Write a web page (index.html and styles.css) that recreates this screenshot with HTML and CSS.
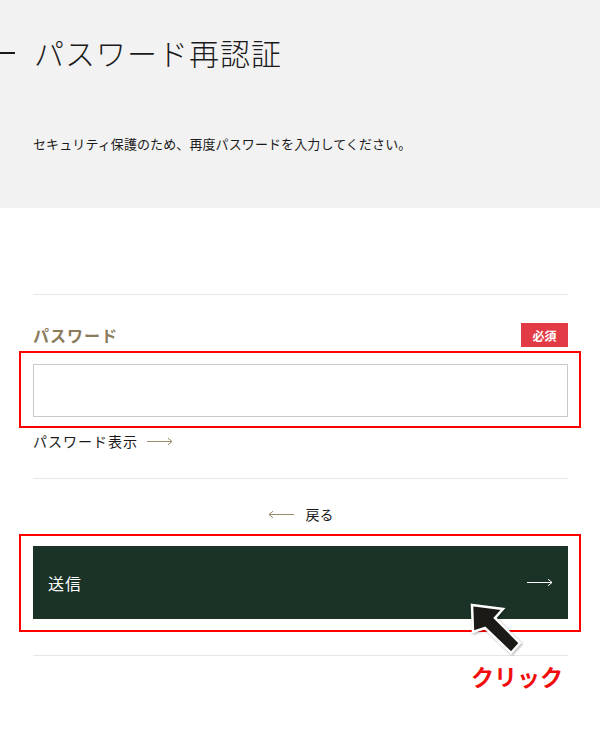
FILE: index.html
```html
<!DOCTYPE html>
<html lang="ja">
<head>
    <meta charset="UTF-8">
    <meta name="viewport" content="width=device-width, initial-scale=1.0">
    <title>パスワード再認証</title>
    <link rel="stylesheet" href="styles.css">
</head>
<body>
    <header class="page-head">
        <h1 class="page-title">パスワード再認証</h1>
        <p class="page-lead">セキュリティ保護のため、再度パスワードを入力してください。</p>
    </header>

    <main class="content">
        <form class="auth-form">
            <div class="field-head">
                <label class="field-label" for="password">パスワード</label>
                <span class="badge">必須</span>
            </div>
            <input class="field-input" type="password" id="password">
            <a class="show-pass" href="#">パスワード表示
                <svg class="arrow" width="26" height="9" viewBox="0 0 26 9"><path d="M0 4.5H25M21 1.2L25 4.5L21 7.8" fill="none" stroke="currentColor" stroke-width="1"/></svg>
            </a>

            <div class="form-actions">
                <a class="back-link" href="#">
                    <svg class="arrow" width="26" height="9" viewBox="0 0 26 9"><path d="M26 4.5H1M5 1.2L1 4.5L5 7.8" fill="none" stroke="currentColor" stroke-width="1"/></svg>
                    戻る
                </a>
                <button class="btn-submit" type="button">
                    <span>送信</span>
                    <svg class="arrow" width="26" height="9" viewBox="0 0 26 9"><path d="M0 4.5H25M21 1.2L25 4.5L21 7.8" fill="none" stroke="currentColor" stroke-width="1"/></svg>
                </button>
            </div>
        </form>
    </main>

    <!-- annotation overlay -->
    <div class="mark mark-input"></div>
    <div class="mark mark-submit"></div>
    <svg class="cursor" width="62" height="60" viewBox="0 0 62 60">
        <polygon points="6,5 37,9 29,18 54,43 45,53 19,28 7,32" fill="#1c1a17" stroke="#fff" stroke-width="2.5" stroke-linejoin="miter"/>
    </svg>
    <div class="click-note">クリック</div>
</body>
</html>
```

FILE: styles.css
```css
* {
    margin: 0;
    padding: 0;
    box-sizing: border-box;
}

body {
    font-family: "Noto Sans CJK JP", "Noto Sans", sans-serif;
    color: #1a1a1a;
    background: #fff;
    position: relative;
    min-height: 748px;
}

a {
    color: inherit;
    text-decoration: none;
}

.page-head {
    background: #f2f2f2;
    padding: 35px 0 54px;
    height: 208px;
}

.page-title {
    display: flex;
    align-items: center;
    gap: 19px;
    font-family: "Liberation Serif", "Noto Sans CJK JP", serif;
    font-weight: 300;
    font-size: 30px;
    line-height: 39px;
    letter-spacing: 1px;
}

.page-title::before {
    content: "";
    width: 15px;
    height: 2px;
    margin-top: -3px;
    background: #1a1a1a;
}

.page-lead {
    margin-top: 60px;
    padding-left: 33px;
    font-size: 13px;
    line-height: 20px;
    letter-spacing: 0.1px;
}

.content {
    padding: 86px 32px 0 33px;
}

.auth-form {
    border-top: 1px solid #e6e6e6;
    padding-top: 28px;
}

.field-head {
    display: flex;
    justify-content: space-between;
    align-items: center;
    height: 24px;
}

.field-label {
    color: #8b7b5c;
    font-weight: 700;
    font-size: 16px;
    letter-spacing: 1px;
}

.badge {
    background: #e23b45;
    color: #fff;
    font-size: 12px;
    font-weight: 700;
    width: 47px;
    height: 24px;
    display: flex;
    align-items: center;
    justify-content: center;
}

.field-input {
    display: block;
    width: 100%;
    height: 53px;
    margin-top: 17px;
    border: 1px solid #c8cbcb;
    background: #fff;
}

.show-pass {
    display: flex;
    align-items: center;
    gap: 9px;
    margin: 14px 0 27px;
    font-size: 14px;
    line-height: 20px;
    letter-spacing: 1px;
}

.show-pass .arrow,
.back-link .arrow {
    color: #9a8b6c;
}

.form-actions {
    border-top: 1px solid #e6e6e6;
    border-bottom: 1px solid #e6e6e6;
    padding: 25px 0 36px;
}

.back-link {
    display: flex;
    justify-content: center;
    align-items: center;
    gap: 12px;
    font-size: 14px;
    line-height: 20px;
}

.btn-submit {
    display: flex;
    justify-content: space-between;
    align-items: center;
    width: 100%;
    height: 73px;
    margin-top: 22px;
    padding: 0 15px;
    border: none;
    background: #1b3226;
    color: #fff;
    font-family: inherit;
    font-size: 16px;
    letter-spacing: 1px;
}

.mark {
    position: absolute;
    left: 19px;
    width: 562px;
    border: 2px solid #ff0000;
}

.mark-input {
    top: 351px;
    height: 77px;
}

.mark-submit {
    top: 534px;
    height: 98px;
}

.cursor {
    position: absolute;
    left: 466px;
    top: 600px;
    filter: drop-shadow(1px 1px 1px rgba(0, 0, 0, 0.3));
}

.click-note {
    position: absolute;
    left: 471px;
    top: 662px;
    color: #f20d0d;
    font-size: 23px;
    font-weight: 700;
    line-height: 28px;
}
```
